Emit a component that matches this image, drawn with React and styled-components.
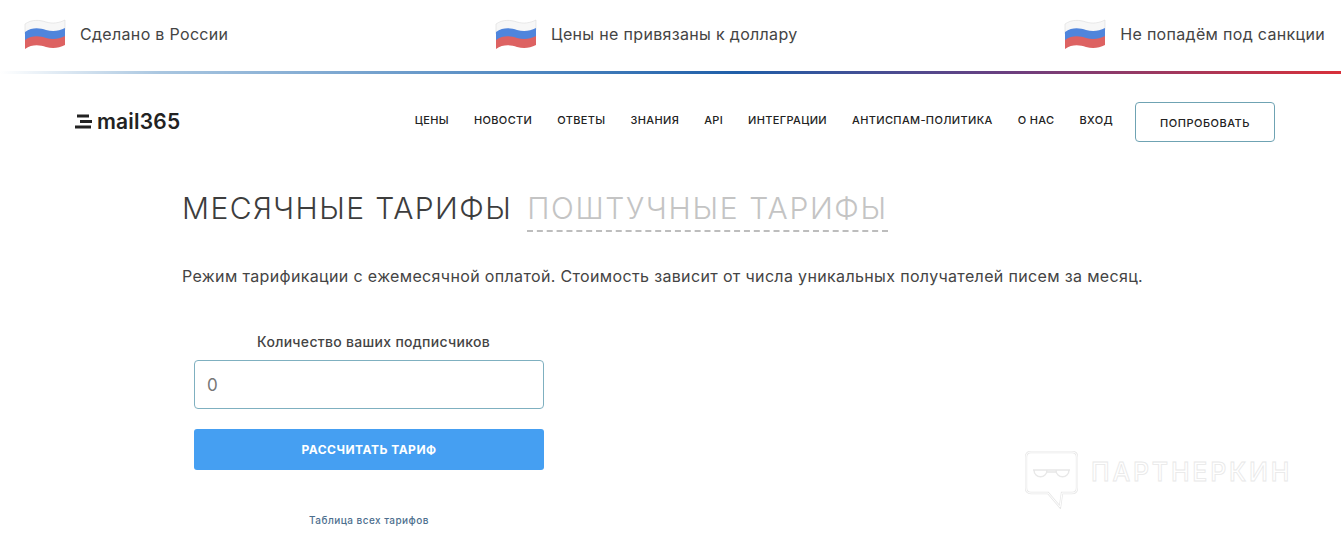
import React from 'react';
import styled, { createGlobalStyle } from 'styled-components';

const GlobalStyle = createGlobalStyle`
  html, body {
    margin: 0;
    background: #fff;
    font-family: Inter, "Liberation Sans", sans-serif;
    color: #3d3d3d;
    overflow: hidden;
  }
`;

const Page = styled.div`
  position: relative;
  width: 1341px;
  height: 560px;
  overflow: hidden;
`;

const TopStrip = styled.div`
  display: flex;
  justify-content: space-between;
  align-items: center;
  height: 71px;
  padding: 0 16px 4px 24px;
  box-sizing: border-box;
`;

const Perk = styled.div`
  display: flex;
  align-items: center;
  gap: 14px;
  font-size: 16px;
  color: #444;
  letter-spacing: 0.32px;
`;

const GradientLine = styled.div`
  height: 3px;
  background: linear-gradient(90deg, #fff 0%, #a9c6e0 12%, #4d86c0 40%, #1f5ea8 55%, #6a3f80 75%, #d8303a 100%);
`;

const Header = styled.header`
  display: flex;
  align-items: center;
  justify-content: space-between;
  height: 40px;
  margin-top: 28px;
  padding: 0 66px 0 75px;
`;

const Logo = styled.div`
  display: flex;
  align-items: center;
  gap: 4px;
  font-size: 21px;
  font-weight: 600;
  color: #222;
  letter-spacing: 0.2px;
  margin-bottom: 2px;
`;

const Nav = styled.nav`
  display: flex;
  align-items: center;
  gap: 25px;
`;

const NavLink = styled.a`
  font-size: 11px;
  font-weight: 500;
  color: #222;
  letter-spacing: 0.35px;
  margin-bottom: 5px;
`;

const TryButton = styled.button`
  width: 140px;
  height: 40px;
  margin-left: -3px;
  background: #fff;
  border: 1px solid #6fa3b3;
  border-radius: 4px;
  font: 500 11px Inter, sans-serif;
  letter-spacing: 0.5px;
  color: #222;
  padding: 2px 0 0;
`;

const Content = styled.main`
  padding: 46px 0 0 182px;
`;

const Tabs = styled.div`
  display: flex;
  gap: 15px;
  align-items: flex-start;
`;

const Tab = styled.div`
  font-size: 30px;
  font-weight: 300;
  line-height: 40px;
  letter-spacing: ${(p) => (p.$muted ? '1.67px' : '1.4px')};
  color: ${(p) => (p.$muted ? '#c4c4c4' : '#3d3d3d')};
  padding-bottom: 2px;
  border-bottom: ${(p) => (p.$muted ? '2px dashed #bdbdbd' : '2px solid transparent')};
`;

const Description = styled.p`
  margin: 32px 0 0;
  font-size: 16px;
  line-height: 24px;
  color: #444;
  letter-spacing: 0.35px;
`;

const CalcForm = styled.form`
  display: flex;
  flex-direction: column;
  width: 350px;
  margin: 44px 0 0 12px;
`;

const FieldLabel = styled.label`
  text-align: center;
  padding-left: 9px;
  font-size: 14px;
  font-weight: 500;
  line-height: 20px;
  color: #444;
  letter-spacing: 0.3px;
`;

const NumberInput = styled.input`
  box-sizing: border-box;
  height: 49px;
  margin-top: 8px;
  padding: 0 12px;
  border: 1px solid #7fb0c0;
  border-radius: 4px;
  font: 400 17px Inter, sans-serif;
  color: #777;
  outline: none;
`;

const SubmitButton = styled.button`
  height: 41px;
  margin-top: 20px;
  border: 0;
  border-radius: 3px;
  background: #459ff2;
  color: #fff;
  font: 700 12px Inter, sans-serif;
  letter-spacing: 0.5px;
`;

const TableLink = styled.a`
  margin-top: 43px;
  text-align: center;
  font-size: 10px;
  font-weight: 500;
  line-height: 14px;
  color: #4d6f8e;
  letter-spacing: 0.45px;
`;

// водяной знак поверх страницы
const Watermark = styled.div`
  position: absolute;
  left: 1025px;
  top: 451px;
  display: flex;
  align-items: flex-start;
  gap: 13px;
`;

const WatermarkText = styled.span`
  margin-top: 5px;
  font-size: 25px;
  font-weight: 500;
  line-height: 32px;
  letter-spacing: 2.8px;
  color: #fff;
  -webkit-text-stroke: 0.8px #e8e8e8;
`;

const Flag = () => (
  <svg width="42" height="32" viewBox="0 0 42 32">
    <path d="M1 6 C8 1 16 2 22 4 C29 6 35 5 41 2 V12 C35 15 29 16 22 14 C16 12 8 11 1 16 Z" fill="#f7f7f7" stroke="#dcdcdc" strokeWidth="0.6" />
    <path d="M1 14 C8 9 16 10 22 12 C29 14 35 13 41 10 V20 C35 23 29 24 22 22 C16 20 8 19 1 24 Z" fill="#4f85dc" />
    <path d="M1 22 C8 17 16 18 22 20 C29 22 35 21 41 18 V27 C35 30 29 31 22 29 C16 27 8 26 1 31 Z" fill="#dd6262" />
  </svg>
);

const LogoMark = () => (
  <svg width="18" height="15" viewBox="0 0 18 15">
    <rect x="2" y="0.5" width="12" height="3" fill="#222" />
    <rect x="5" y="6" width="12" height="3" fill="#222" />
    <rect x="0" y="11.5" width="16" height="3" fill="#222" />
  </svg>
);

const iconFrame = 'M6 1 H47 Q52 1 52 6 V37 Q52 42 47 42 H37 L35 56 L23 42 H6 Q1 42 1 37 V6 Q1 1 6 1 Z';
const iconGlasses = 'M8 19 H45 M9 19 C9 28 22 28 22 19 M31 19 C31 28 44 28 44 19 M22 21 H31';

const WatermarkIcon = () => (
  <svg width="53" height="58" viewBox="0 0 53 58" fill="none">
    <path d={iconFrame} stroke="#e8e8e8" strokeWidth="2.4" />
    <path d={iconFrame} stroke="#fff" strokeWidth="1" />
    <path d={iconGlasses} stroke="#e8e8e8" strokeWidth="1.4" />
  </svg>
);

const navItems = ['Цены', 'Новости', 'Ответы', 'Знания', 'API', 'Интеграции', 'Антиспам-политика', 'О нас', 'Вход'];
const perks = ['Сделано в России', 'Цены не привязаны к доллару', 'Не попадём под санкции'];

const App = () => (
  <Page>
    <GlobalStyle />
    <TopStrip>
      {perks.map((text) => (
        <Perk key={text}>
          <Flag />
          {text}
        </Perk>
      ))}
    </TopStrip>
    <GradientLine />
    <Header>
      <Logo>
        <LogoMark />
        mail365
      </Logo>
      <Nav>
        {navItems.map((item) => (
          <NavLink key={item}>{item.toUpperCase()}</NavLink>
        ))}
        <TryButton type="button">ПОПРОБОВАТЬ</TryButton>
      </Nav>
    </Header>
    <Content>
      <Tabs>
        <Tab>МЕСЯЧНЫЕ ТАРИФЫ</Tab>
        <Tab $muted>ПОШТУЧНЫЕ ТАРИФЫ</Tab>
      </Tabs>
      <Description>
        Режим тарификации с ежемесячной оплатой. Стоимость зависит от числа уникальных получателей писем за месяц.
      </Description>
      <CalcForm>
        <FieldLabel>Количество ваших подписчиков</FieldLabel>
        <NumberInput defaultValue="0" />
        <SubmitButton type="button">РАССЧИТАТЬ ТАРИФ</SubmitButton>
        <TableLink>Таблица всех тарифов</TableLink>
      </CalcForm>
    </Content>
    <Watermark>
      <WatermarkIcon />
      <WatermarkText>ПАРТНЕРКИН</WatermarkText>
    </Watermark>
  </Page>
);

export default App;
